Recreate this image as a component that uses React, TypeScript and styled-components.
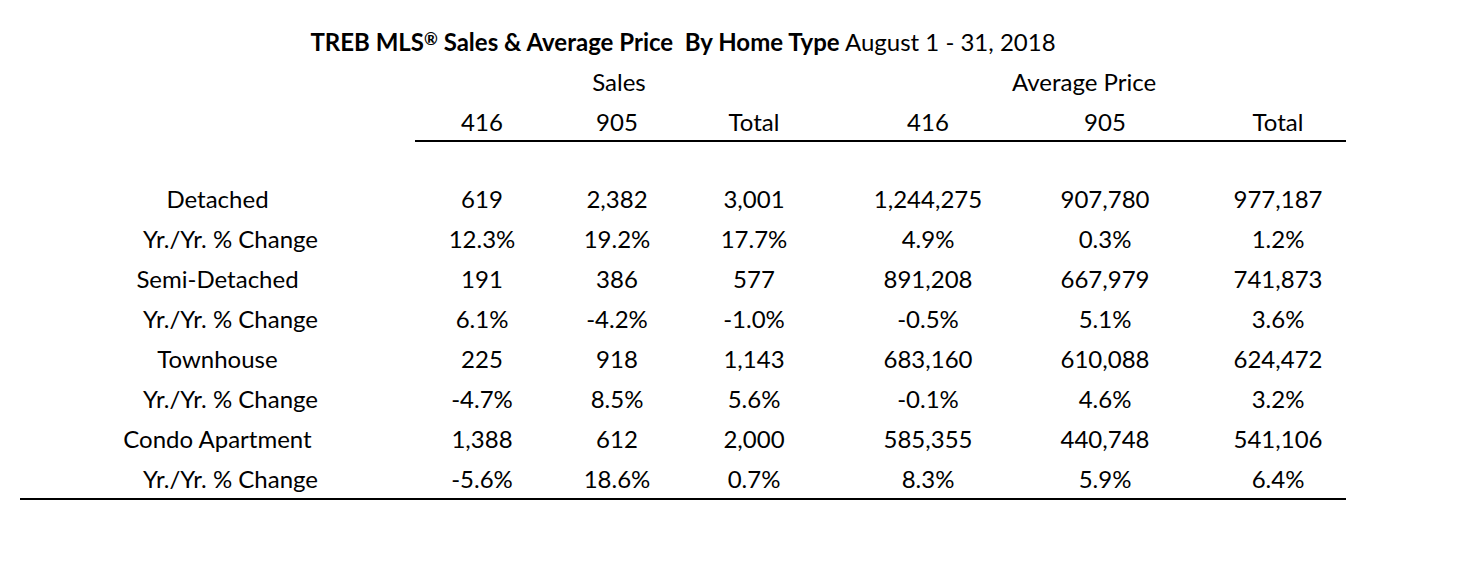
import React from "react";
import styled, { createGlobalStyle } from "styled-components";

const GlobalStyle = createGlobalStyle`
  body {
    margin: 0;
    background: #ffffff;
    color: #000000;
    font-family: Lato, "Open Sans", sans-serif;
  }
`;

const Page = styled.div`
  width: 1466px;
  height: 582px;
  padding: 22px 0 0 20px;
  box-sizing: border-box;
`;

const Title = styled.div`
  width: 1326px;
  text-align: center;
  font-size: 24px;
  line-height: 40px;
  white-space: pre;
`;

const Strong = styled.span`
  font-weight: 700;
`;

const Mark = styled.span`
  font-size: 0.7em;
  vertical-align: 0.35em;
  line-height: 0;
`;

const Table = styled.div`
  display: grid;
  grid-template-columns: 395px 134px 136px 138px 210px 144px 202px;
  grid-auto-rows: auto;
  font-size: 24px;
  line-height: 40px;
`;

const Cell = styled.div<{ $indent?: boolean; $short?: boolean }>`
  height: ${(p) => (p.$short ? "38px" : "40px")};
  text-align: center;
  white-space: nowrap;
  padding-left: ${(p) => (p.$indent ? "26px" : "0")};
`;

const Group = styled.div<{ $from: number; $to: number; $trim?: number }>`
  grid-column: ${(p) => p.$from} / ${(p) => p.$to};
  height: 40px;
  text-align: center;
  padding-right: ${(p) => p.$trim ?? 0}px;
`;

const Rule = styled.div<{ $from: number; $lift?: number }>`
  grid-column: ${(p) => p.$from} / -1;
  margin-right: 33px;
  margin-top: ${(p) => -(p.$lift ?? 0)}px;
  height: 2px;
  background: #000000;
`;

const Spacer = styled.div`
  grid-column: 1 / -1;
  height: 37px;
`;

const rows: [string, string[], boolean?][] = [
  ["Detached", ["619", "2,382", "3,001", "1,244,275", "907,780", "977,187"]],
  ["Yr./Yr. % Change", ["12.3%", "19.2%", "17.7%", "4.9%", "0.3%", "1.2%"], true],
  ["Semi-Detached", ["191", "386", "577", "891,208", "667,979", "741,873"]],
  ["Yr./Yr. % Change", ["6.1%", "-4.2%", "-1.0%", "-0.5%", "5.1%", "3.6%"], true],
  ["Townhouse", ["225", "918", "1,143", "683,160", "610,088", "624,472"]],
  ["Yr./Yr. % Change", ["-4.7%", "8.5%", "5.6%", "-0.1%", "4.6%", "3.2%"], true],
  ["Condo Apartment", ["1,388", "612", "2,000", "585,355", "440,748", "541,106"]],
  ["Yr./Yr. % Change", ["-5.6%", "18.6%", "0.7%", "8.3%", "5.9%", "6.4%"], true],
];

const columns = ["416", "905", "Total", "416", "905", "Total"];

export default function App() {
  return (
    <Page>
      <GlobalStyle />
      <Title>
        <Strong>
          TREB MLS<Mark>®</Mark>
          {" Sales & Average Price  By Home Type"}
        </Strong>{" "}
        August 1 - 31, 2018
      </Title>
      <Table>
        <Cell />
        <Group $from={2} $to={5}>Sales</Group>
        <Group $from={5} $to={8} $trim={34}>Average Price</Group>
        <Cell $short />
        {columns.map((c, i) => (
          <Cell key={i} $short>{c}</Cell>
        ))}
        <Rule $from={2} />
        <Spacer />
        {rows.map(([label, values, indent], r) => (
          <React.Fragment key={r}>
            <Cell $indent={indent}>{label}</Cell>
            {values.map((v, i) => (
              <Cell key={i}>{v}</Cell>
            ))}
          </React.Fragment>
        ))}
        <Rule $from={1} $lift={1} />
      </Table>
    </Page>
  );
}
